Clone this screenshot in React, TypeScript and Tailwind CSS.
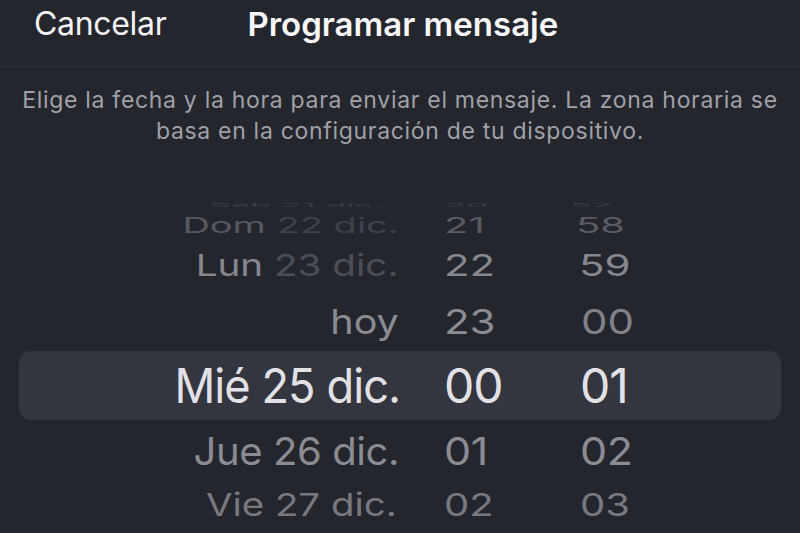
import React from "react";

const font = { fontFamily: "Inter, 'Noto Sans', sans-serif" };

export default function App() {
  return (
    <div
      className="w-[800px] h-[533px] overflow-hidden bg-[#24262e] text-white"
      style={font}
    >
      {/* Header */}
      <div className="h-[67px] border-b border-[#2d2f37] flex items-start pt-[8px]">
        <div className="ml-[34px] text-[32px] leading-8 text-[#f2f2f5] tracking-[-0.01em]">
          Cancelar
        </div>
        <div className="ml-[81px] text-[33px] leading-8 font-semibold text-[#f7f7fa]">
          Programar mensaje
        </div>
      </div>

      {/* Description */}
      <div className="h-[128px] pt-[18px] text-center text-[23px] leading-[31px] tracking-[0.03em] text-[#9fa1a7]">
        Elige la fecha y la hora para enviar el mensaje. La zona horaria se
        <br />
        basa en la configuración de tu dispositivo.
      </div>

      {/* Picker */}
      <div className="flex flex-col">
        {/* Sáb */}
        <div className="h-[20px] flex items-center leading-none text-[36px] text-[#3a3c44]">
          <div className="w-[384px] text-right">
            <span className="inline-block origin-right scale-y-[0.15] scale-x-[0.95]">Sáb 21 dic.</span>
          </div>
          <div className="ml-[60px] w-[126px]">
            <span className="inline-block origin-left scale-y-[0.15]">20</span>
          </div>
          <div>
            <span className="inline-block origin-left scale-y-[0.15]">57</span>
          </div>
        </div>

        {/* Dom */}
        <div className="h-[22px] flex items-center leading-none text-[40px]">
          <div className="w-[399px] text-right">
            <span className="inline-block origin-right scale-y-[0.52] scale-x-[0.95]">
              <span className="text-[#57595f]">Dom</span>{" "}
              <span className="text-[#3f4148]">22 dic.</span>
            </span>
          </div>
          <div className="ml-[45px] w-[132px] text-[#5a5c62]">
            <span className="inline-block origin-left scale-y-[0.52]">21</span>
          </div>
          <div className="text-[#5a5c62]">
            <span className="inline-block origin-left scale-y-[0.52]">58</span>
          </div>
        </div>

        {/* Lun */}
        <div className="h-[56px] flex items-center leading-none text-[42px]">
          <div className="w-[399px] text-right">
            <span className="inline-block origin-right scale-y-[0.72] scale-x-[0.92]">
              <span className="text-[#86888e]">Lun</span>{" "}
              <span className="text-[#4c4e55]">23 dic.</span>
            </span>
          </div>
          <div className="ml-[45px] w-[135px] text-[#86888e]">
            <span className="inline-block origin-left scale-y-[0.72]">22</span>
          </div>
          <div className="text-[#86888e]">
            <span className="inline-block origin-left scale-y-[0.72]">59</span>
          </div>
        </div>

        {/* hoy */}
        <div className="h-[58px] flex items-center leading-none text-[42px]">
          <div className="w-[399px] text-right text-[#8a8c92]">
            <span className="inline-block origin-right scale-y-[0.82] scale-x-[0.94]">hoy</span>
          </div>
          <div className="ml-[45px] w-[137px] text-[#8a8c92]">
            <span className="inline-block origin-left scale-y-[0.82]">23</span>
          </div>
          <div className="text-[#808288]">
            <span className="inline-block origin-left scale-y-[0.82]">00</span>
          </div>
        </div>

        {/* Mié (selected) */}
        <div className="h-[69px] mx-[19px] rounded-[12px] bg-[#33363e] flex items-center leading-none text-[48px] text-[#e2e2e6] tracking-[-0.02em]">
          <div className="w-[381px] text-right">
            <span className="inline-block origin-right scale-x-[0.94]">Mié 25 dic.</span>
          </div>
          <div className="ml-[44px] w-[136px]">
            <span className="inline-block">00</span>
          </div>
          <div>
            <span className="inline-block">01</span>
          </div>
        </div>

        {/* Jue */}
        <div className="h-[62px] flex items-center leading-none text-[43px] text-[#8a8c92] tracking-[-0.01em]">
          <div className="w-[399px] text-right">
            <span className="inline-block origin-right scale-y-[0.9] scale-x-[0.93]">Jue 26 dic.</span>
          </div>
          <div className="ml-[45px] w-[136px]">
            <span className="inline-block origin-left scale-y-[0.9]">01</span>
          </div>
          <div>
            <span className="inline-block origin-left scale-y-[0.9]">02</span>
          </div>
        </div>

        {/* Vie */}
        <div className="h-[46px] flex items-center leading-none text-[40px] text-[#77797f]">
          <div className="w-[397px] text-right">
            <span className="inline-block origin-right scale-y-[0.79] scale-x-[0.96]">Vie 27 dic.</span>
          </div>
          <div className="ml-[47px] w-[136px]">
            <span className="inline-block origin-left scale-y-[0.79]">02</span>
          </div>
          <div>
            <span className="inline-block origin-left scale-y-[0.79]">03</span>
          </div>
        </div>
      </div>
    </div>
  );
}
